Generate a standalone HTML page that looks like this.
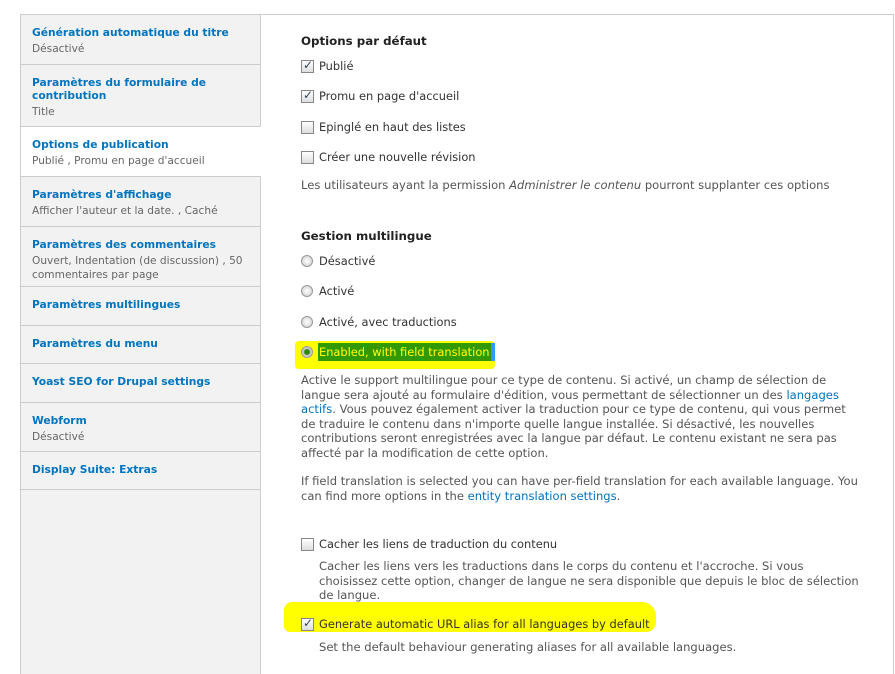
<!DOCTYPE html>
<html><head><meta charset="utf-8"><style>
*{margin:0;padding:0;box-sizing:border-box}
body{width:895px;height:665px;background:#fff;font-family:"DejaVu Sans","Liberation Sans",sans-serif;font-size:11.5px;color:#333;position:relative;overflow:hidden}
.frame{position:absolute;left:20px;top:14px;width:874px;height:660px;border:1px solid #ccc;border-bottom:none}
.side{position:absolute;left:20px;top:14px;width:241px;height:660px;background:#f2f2f2;border-left:1px solid #ccc;border-right:1px solid #ccc}
.it{position:absolute;left:20px;width:241px;border-top:1px solid #ccc;border-left:1px solid #ccc;border-right:1px solid #ccc;padding:11px 0 0 11px;line-height:13px;background:#f2f2f2}
.it b{display:block;color:#0074bd;font-size:10.7px;line-height:13px;margin-bottom:3px}
.it span{color:#666;font-size:10.6px}
.it.act{background:#fff;border-right:1px solid #fff}
h3{position:absolute;left:301px;font-size:11.8px;font-weight:bold;color:#222;white-space:nowrap}
.cb{position:absolute;left:301px;width:13px;height:13px;border:1px solid #888;background:linear-gradient(#fff,#ddd)}
.cb.c::after{content:"✓";position:absolute;left:1px;top:-3px;font-size:12px;color:#345;font-weight:bold}
.rd{position:absolute;left:301px;width:12px;height:12px;border-radius:50%;border:1px solid #999;background:radial-gradient(#fff,#ccc)}
.lbl{position:absolute;left:319px;white-space:nowrap;color:#333;line-height:15px;font-size:11.4px}
.p{position:absolute;left:301px;color:#555;line-height:14.6px;white-space:nowrap;font-size:11.55px}
.p.i{left:319px}
a{color:#0074bd;text-decoration:none}
</style></head><body>
<div class="frame"></div>
<div class="side"></div>
<div class="it" style="top:14px;height:50px"><b>Génération automatique du titre</b><span>Désactivé</span></div>
<div class="it" style="top:64px;height:62px"><b>Paramètres du formulaire de contribution</b><span>Title</span></div>
<div class="it act" style="top:126px;height:50px"><b>Options de publication</b><span>Publié , Promu en page d'accueil</span></div>
<div class="it" style="top:176px;height:50px"><b>Paramètres d'affichage</b><span>Afficher l'auteur et la date. , Caché</span></div>
<div class="it" style="top:226px;height:60px"><b>Paramètres des commentaires</b><span>Ouvert, Indentation (de discussion) , 50 commentaires par page</span></div>
<div class="it" style="top:286px;height:39px"><b>Paramètres multilingues</b></div>
<div class="it" style="top:325px;height:38px"><b>Paramètres du menu</b></div>
<div class="it" style="top:363px;height:39px"><b>Yoast SEO for Drupal settings</b></div>
<div class="it" style="top:402px;height:49px"><b>Webform</b><span>Désactivé</span></div>
<div class="it" style="top:451px;height:39px;border-bottom:1px solid #ccc"><b>Display Suite: Extras</b></div>

<h3 style="top:34px">Options par défaut</h3>
<div class="cb c" style="top:60px"></div><div class="lbl" style="top:59px">Publié</div>
<div class="cb c" style="top:90px"></div><div class="lbl" style="top:89px">Promu en page d'accueil</div>
<div class="cb" style="top:121px"></div><div class="lbl" style="top:120px">Epinglé en haut des listes</div>
<div class="cb" style="top:151px"></div><div class="lbl" style="top:150px">Créer une nouvelle révision</div>
<div class="p" style="top:178px">Les utilisateurs ayant la permission <i>Administrer le contenu</i> pourront supplanter ces options</div>

<h3 style="top:229px">Gestion multilingue</h3>
<div class="rd" style="top:255px"></div><div class="lbl" style="top:254px">Désactivé</div>
<div class="rd" style="top:285px"></div><div class="lbl" style="top:284px">Activé</div>
<div class="rd" style="top:316px"></div><div class="lbl" style="top:315px">Activé, avec traductions</div>
<div style="position:absolute;left:295px;top:341px;width:200px;height:28px;background:#ffff00;border-radius:4px"></div>
<div style="position:absolute;left:318px;top:343px;width:177px;height:18px;background:#339900;border-right:4px solid #3399ff"></div>
<div class="rd" style="top:346px;background:radial-gradient(#2a8a00 35%,#bbb 45%,#eee)"></div><div class="lbl" style="top:345px;color:#ffff00">Enabled, with field translation</div>
<div class="p" style="top:373px">Active le support multilingue pour ce type de contenu. Si activé, un champ de sélection de<br>langue sera ajouté au formulaire d'édition, vous permettant de sélectionner un des <a>langages</a><br><a>actifs</a>. Vous pouvez également activer la traduction pour ce type de contenu, qui vous permet<br>de traduire le contenu dans n'importe quelle langue installée. Si désactivé, les nouvelles<br>contributions seront enregistrées avec la langue par défaut. Le contenu existant ne sera pas<br>affecté par la modification de cette option.</div>
<div class="p" style="top:474px">If field translation is selected you can have per-field translation for each available language. You<br>can find more options in the <a>entity translation settings</a>.</div>

<div class="cb" style="top:538px"></div><div class="lbl" style="top:537px">Cacher les liens de traduction du contenu</div>
<div class="p i" style="top:559px">Cacher les liens vers les traductions dans le corps du contenu et l'accroche. Si vous<br>choisissez cette option, changer de langue ne sera disponible que depuis le bloc de sélection<br>de langue.</div>
<div style="position:absolute;left:284px;top:602px;width:372px;height:30px;background:#ffff00;border-radius:8px 14px 10px 6px"></div>
<div class="cb c" style="top:618px"></div><div class="lbl" style="top:617px">Generate automatic URL alias for all languages by default</div>
<div class="p i" style="top:640px">Set the default behaviour generating aliases for all available languages.</div>
</body></html>
